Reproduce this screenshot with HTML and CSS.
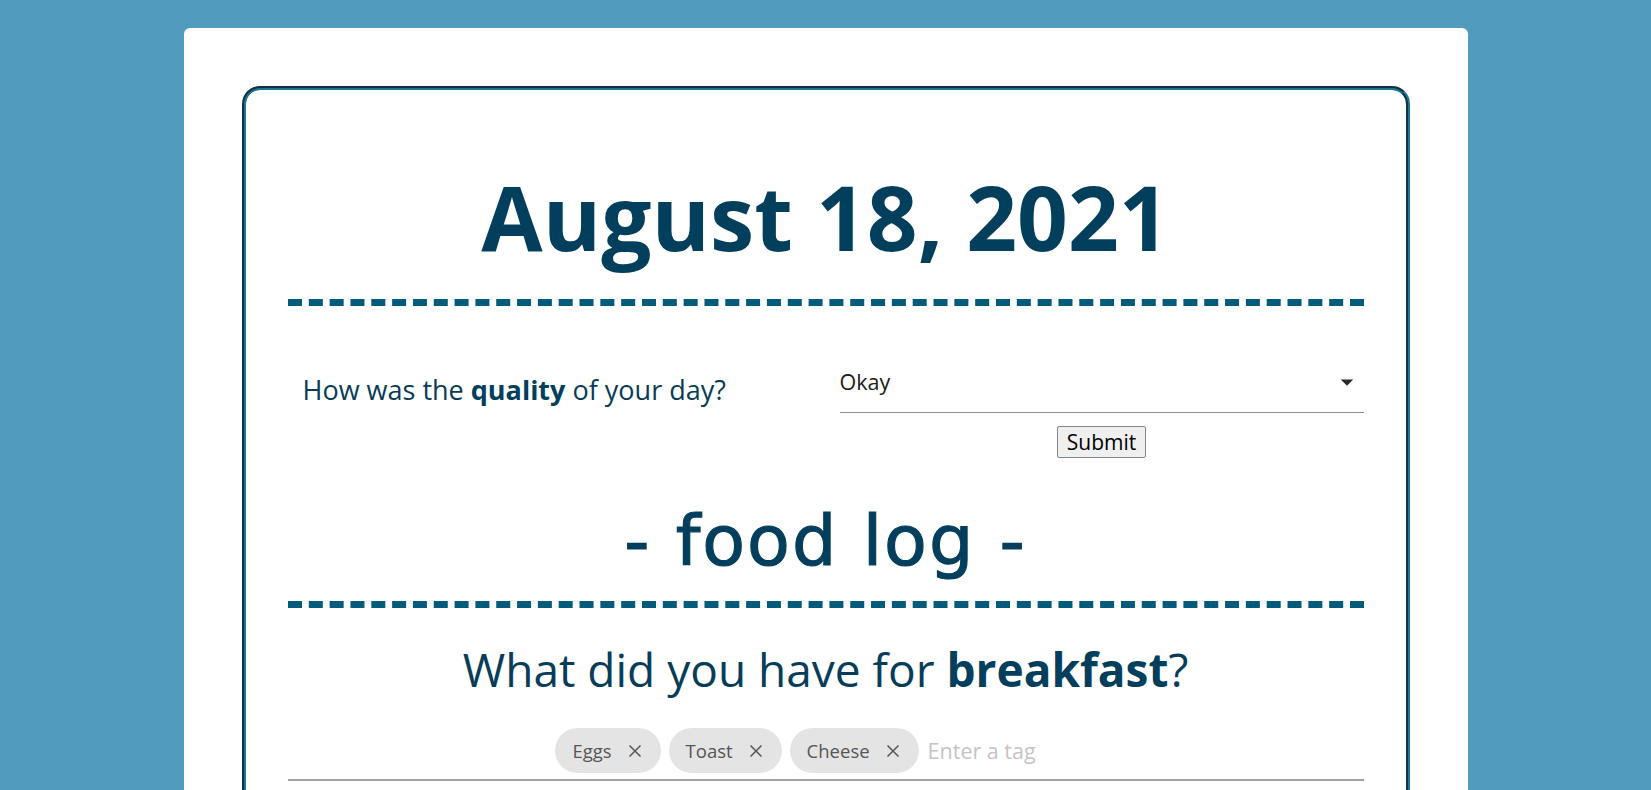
FILE: index.html
```html
<!DOCTYPE html>
<html lang="en">
<head>
<meta charset="utf-8">
<title>Daily Log</title>
<link rel="stylesheet" href="styles.css">
</head>
<body>
  <main class="card">
    <section class="journal">
      <h1 class="date">August 18, 2021</h1>
      <div class="divider"></div>

      <div class="quality-row">
        <p class="quality-label">How was the <strong>quality</strong> of your day?</p>
        <div class="quality-control">
          <div class="select">
            <span class="select-value">Okay</span>
            <svg class="select-arrow" viewBox="0 0 24 24" aria-hidden="true"><path d="M7 10l5 5 5-5z"/></svg>
          </div>
          <button class="submit" type="button">Submit</button>
        </div>
      </div>

      <h2 class="section-title">- food log -</h2>
      <div class="divider"></div>

      <h3 class="meal-question">What did you have for <strong>breakfast</strong>?</h3>
      <div class="tag-input">
        <span class="chip">Eggs<svg class="chip-x" viewBox="0 0 14 14" aria-hidden="true"><path d="M1.5 1.5l11 11M12.5 1.5l-11 11"/></svg></span>
        <span class="chip">Toast<svg class="chip-x" viewBox="0 0 14 14" aria-hidden="true"><path d="M1.5 1.5l11 11M12.5 1.5l-11 11"/></svg></span>
        <span class="chip">Cheese<svg class="chip-x" viewBox="0 0 14 14" aria-hidden="true"><path d="M1.5 1.5l11 11M12.5 1.5l-11 11"/></svg></span>
        <input class="tag-field" type="text" placeholder="Enter a tag">
      </div>
    </section>
  </main>
</body>
</html>
```

FILE: styles.css
```css
* {
  box-sizing: border-box;
}

html, body {
  margin: 0;
  height: 100%;
  overflow: hidden;
}

body {
  background: #519cbe;
  padding-top: 28px;
  font-family: "Open Sans", "Noto Sans", sans-serif;
  color: #033e5b;
}

.card {
  width: 1284px;
  margin: 0 auto;
  background: #ffffff;
  border-radius: 6px;
  padding: 58px 58px 0;
  min-height: 900px;
}

.journal {
  border: 4px groove #1f7395;
  border-radius: 18px;
  padding: 0 42px 60px;
  min-height: 800px;
}

.date {
  margin: 82px 0 0;
  font-size: 89px;
  line-height: 89px;
  font-weight: 700;
  text-align: center;
  color: #023f5c;
}

.divider {
  height: 0;
  border-top: 7px dashed #035b7b;
}

.journal .date + .divider {
  margin-top: 38px;
}

.quality-row {
  display: grid;
  grid-template-columns: 552px 1fr;
  margin-top: 62px;
  align-items: start;
}

.quality-label {
  margin: 6px 0 0;
  padding-left: 15px;
  font-size: 27px;
  line-height: 32px;
  color: #083b56;
}

.quality-label strong {
  font-weight: 700;
  color: #023f5c;
}

.quality-control {
  display: flex;
  flex-direction: column;
  align-items: center;
}

.select {
  align-self: stretch;
  display: flex;
  align-items: center;
  justify-content: space-between;
  padding-bottom: 16px;
  border-bottom: 1px solid #8c8c8c;
  height: 45px;
}

.select-value {
  font-size: 21.5px;
  line-height: 28px;
  color: #1b1b1b;
}

.select-arrow {
  width: 30px;
  height: 30px;
  margin-right: 2px;
  fill: #2a2a2a;
}

.submit {
  margin-top: 13px;
  height: 32px;
  padding: 0 9px;
  font-family: "Open Sans", "Noto Sans", sans-serif;
  font-size: 21px;
  line-height: 26px;
  color: #000;
  background: #efefef;
  border: 1px solid #858585;
  border-radius: 2px;
}

.section-title {
  margin: 41px 0 0;
  font-family: "DejaVu Sans", sans-serif;
  font-weight: 400;
  font-size: 70px;
  letter-spacing: 2px;
  line-height: 1.2;
  text-align: center;
  color: #033f5c;
  -webkit-text-stroke: 1.2px #033f5c;
}

.section-title + .divider {
  margin-top: 18px;
}

.meal-question {
  margin: 34px 0 0;
  font-size: 46px;
  line-height: 1.2;
  font-weight: 400;
  text-align: center;
  color: #073d58;
}

.meal-question strong {
  font-weight: 700;
  color: #023f5c;
}

.tag-input {
  margin-top: 31px;
  display: flex;
  justify-content: center;
  align-items: center;
  gap: 8px;
  padding-bottom: 6px;
  border-bottom: 2px solid #a0a0a0;
}

.chip {
  display: inline-flex;
  align-items: center;
  gap: 16px;
  height: 45px;
  padding: 0 19px 0 17px;
  border-radius: 23px;
  background: #e4e4e4;
  font-size: 18.5px;
  color: #555555;
}

.chip-x {
  width: 14px;
  height: 14px;
  stroke: #555555;
  stroke-width: 1.5;
  fill: none;
}

.tag-field {
  width: 169px;
  padding: 0 0 0 1px;
  border: none;
  outline: none;
  background: transparent;
  font-family: "Open Sans", "Noto Sans", sans-serif;
  font-size: 21.5px;
  color: #333;
}

.tag-field::placeholder {
  color: #c4c4c4;
}
```
